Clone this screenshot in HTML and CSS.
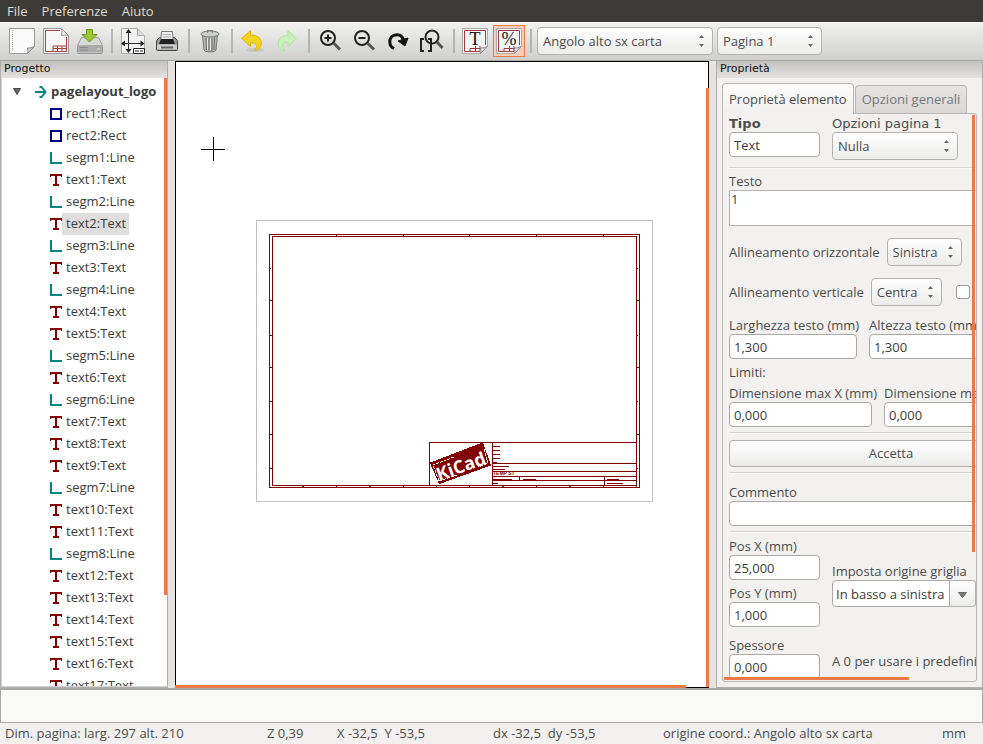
FILE: index.html
```
<!DOCTYPE html>
<html lang="it">
<head>
    <meta charset="UTF-8">
    <meta name="viewport" content="width=device-width, initial-scale=1.0">
    <title>Editor layout pagina</title>
    <link rel="stylesheet" href="styles.css">
</head>
<body>
    <nav class="menubar">
        <button type="button">File</button>
        <button type="button">Preferenze</button>
        <button type="button">Aiuto</button>
    </nav>

    <div class="toolbar">
        <button type="button" class="tool" aria-label="Nuovo">
            <svg width="26" height="26" viewBox="0 0 26 26"><path d="M.5.5h25v18l-7 7H.5z" fill="#fafafa" stroke="#999"/><path d="M3.500 2v22" stroke="#bbb" stroke-dasharray="1 1"/><path d="M25 18.500q-3 2-6.500 1.500 1 3 0 5.500z" fill="#ddd" stroke="#888"/></svg>
        </button>
        <button type="button" class="tool" aria-label="Apri">
            <svg width="26" height="26" viewBox="0 0 26 26"><path d="M.5.500h18l7 7v18H.5z" fill="#f6f6f6" stroke="#999"/><path d="M17 2.500H2.500v21h21V9M10 23v-5h13M10 20.500h13M14.500 18v5M19 18v5" fill="none" stroke="#b04048"/><path d="M18.500.5q1 3.500 0 7 3.500-1 7 0z" fill="#eee" stroke="#999"/></svg>
        </button>
        <button type="button" class="tool" aria-label="Salva">
            <svg width="26" height="26" viewBox="0 0 26 26"><path d="M4.500 9.500h17l4 8v7q0 1-1 1h-23q-1 0-1-1v-7z" fill="#d8d8d8" stroke="#999"/><path d="M1 17h24v7.500H1z" fill="#aaa"/><path d="M3 19.500h8M3 22h8" stroke="#888"/><path d="M20 21h3" stroke="#eee"/><path d="M9.500 1.500h6v5h4.500l-7.500 7.500-7.500-7.500h4.500z" fill="#9cc832" stroke="#6d9420"/></svg>
        </button>
        <span class="sep"></span>
        <button type="button" class="tool" aria-label="Dimensioni pagina">
            <svg width="26" height="26" viewBox="0 0 26 26"><path d="M1.500.500h16l7 7v18h-23z" fill="#f4f4f4" stroke="#aaa"/><path d="M17.500.5v7h7" fill="#ddd" stroke="#aaa"/><path d="M8.500 3v21M3 15.500h20" stroke="#333"/><path d="M8.500 1l3 4h-6zM8.500 25l3-4h-6zM1 15.500l4-3v6zM24.500 15.500l-4-3v6z" fill="#222"/><path d="M13.500 20.500h11v5h-11zM15 23h4M20 23h3" fill="#fff" stroke="#222"/></svg>
        </button>
        <button type="button" class="tool" aria-label="Stampa">
            <svg width="24" height="24" viewBox="0 0 24 24"><path d="M1.500 11.500l3-3h15l3 3v9q0 1-1 1h-19q-1 0-1-1z" fill="#999" stroke="#444"/><path d="M6.500 2.500h11l1 12h-13z" fill="#eee" stroke="#777"/><path d="M6 10h12l2 5H4z" fill="#222"/><path d="M2 15.500h20v5H2z" fill="#ccc"/><path d="M6 18.500h12" stroke="#666" stroke-width="2"/><path d="M8 5.500h8M8 8h8" stroke="#aaa"/></svg>
        </button>
        <span class="sep"></span>
        <button type="button" class="tool" aria-label="Elimina">
            <svg width="20" height="24" viewBox="0 0 20 24"><path d="M2.500 6l1.500 15q0 2 6 2t6-2L17.500 6z" fill="#b4b6b2" stroke="#777"/><path d="M6 8.500l.5 12.500M9 9v13M12 9v13M14.500 8.500L14 21" stroke="#6b6d69" fill="none"/><path d="M7.500 8.500v12M10.500 9v12" stroke="#e8e8e8"/><ellipse cx="10" cy="5" rx="9" ry="3" fill="#ccceca" stroke="#777"/><path d="M7.500 4V1.500h5V4" fill="none" stroke="#777"/></svg>
        </button>
        <span class="sep"></span>
        <button type="button" class="tool" aria-label="Annulla">
            <svg width="24" height="24" viewBox="0 0 24 24"><ellipse cx="14" cy="21" rx="9" ry="2" fill="#c6c6c6"/><path d="M9.500 1.500v4.500c7.500 0 12 4 10.500 10-.6 3-2.500 5-6.500 5.500 3-3 3.500-8-4-8v4L.5 9.500z" fill="#f3d322" stroke="#e0b400"/></svg>
        </button>
        <button type="button" class="tool" aria-label="Ripeti">
            <svg width="24" height="24" viewBox="0 0 24 24"><ellipse cx="11" cy="21" rx="9" ry="2" fill="#d4dcd0"/><path d="M13 1.500v5c-7 0-11 4-9.500 10 .6 3 2.500 5 6.500 5.500-3-3-4-9.500 3-9v4.500l8.500-8z" fill="#c8f0b8" stroke="#b2e0a2"/></svg>
        </button>
        <span class="sep"></span>
        <button type="button" class="tool" aria-label="Ingrandisci">
            <svg width="22" height="24" viewBox="0 0 22 24"><circle cx="9" cy="9" r="7" fill="none" stroke="#222" stroke-width="2"/><path d="M9 5.500v7M5.500 9h7" stroke="#222" stroke-width="2"/><path d="M14.500 14l6.500 6.500" stroke="#555" stroke-width="3"/></svg>
        </button>
        <button type="button" class="tool" aria-label="Riduci">
            <svg width="22" height="24" viewBox="0 0 22 24"><circle cx="9" cy="9" r="7" fill="none" stroke="#222" stroke-width="2"/><path d="M5.500 9h7" stroke="#222" stroke-width="2"/><path d="M14.500 14l6.500 6.500" stroke="#555" stroke-width="3"/></svg>
        </button>
        <button type="button" class="tool" aria-label="Ridisegna">
            <svg width="22" height="24" viewBox="0 0 22 24"><path d="M7 19.500C1.500 17 1.500 9 6.500 6.500c4.500-2 8.500-.5 10 4.500" fill="none" stroke="#111" stroke-width="3"/><path d="M11 12l10-3-3 8z" fill="#111" stroke="#111"/></svg>
        </button>
        <button type="button" class="tool" aria-label="Zoom automatico">
            <svg width="26" height="24" viewBox="0 0 26 24"><circle cx="13" cy="8" r="6.500" fill="none" stroke="#222" stroke-width="2"/><path d="M18 13l5.500 6" stroke="#555" stroke-width="3"/><path d="M5 10H2v12h3M9 10h3v12H9" fill="none" stroke="#222" stroke-width="2"/></svg>
        </button>
        <span class="sep"></span>
        <button type="button" class="tool" aria-label="Mostra testi">
            <svg width="26" height="26" viewBox="0 0 26 26"><path d="M.5.500h25v18l-7 7H.5z" fill="#f6f6f6" stroke="#aaa"/><path d="M18 23.500H2.500v-21h21V17M8 20.500h12M8 23v-2.500M13.500 18v5M18 18v5" fill="none" stroke="#a83840"/><path d="M25 18.500q-3 2-6.500 1.500 1 3 0 5.500z" fill="#eee" stroke="#888"/><text x="13" y="17" class="glyph">T</text></svg>
        </button>
        <button type="button" class="tool active" aria-label="Mostra formati">
            <svg width="26" height="26" viewBox="0 0 26 26"><path d="M.5.500h25v18l-7 7H.5z" fill="#f6f6f6" stroke="#aaa"/><path d="M18 23.500H2.500v-21h21V17M8 20.500h12M8 23v-2.500M13.500 18v5M18 18v5" fill="none" stroke="#a83840"/><path d="M25 18.500q-3 2-6.500 1.500 1 3 0 5.500z" fill="#eee" stroke="#888"/><text x="13" y="17" class="glyph">%</text></svg>
        </button>
        <span class="sep"></span>
        <select class="combo origin" aria-label="Origine coordinate"><option>Angolo alto sx carta</option></select>
        <select class="combo page" aria-label="Pagina"><option>Pagina 1</option></select>
    </div>

    <main class="workspace">
        <section class="panel project">
            <h2>Progetto</h2>
            <div class="tree-wrap">
                <ul class="tree" id="tree">
                    <li class="root">
                        <svg width="10" height="8" viewBox="0 0 10 8"><path d="M1.500.500h7L5 6.500z" fill="#666" stroke="#444"/></svg>
                        <svg class="arrow" width="12" height="12" viewBox="0 0 12 12"><path d="M0 6h10M4.500 1h2l4 5-4 5h-2" fill="none" stroke="#008484" stroke-width="2"/></svg>
                        <span>pagelayout_logo</span>
                    </li>
                </ul>
                <div class="vscroll"></div>
            </div>
        </section>

        <div class="sash"></div>

        <section class="canvas">
            <svg class="sheet" width="100%" height="100%" shape-rendering="crispEdges">
                <g transform="translate(-176 -62)" fill="none" stroke="#840000">
                    <path d="M201 149.500h24M213.500 137v24" stroke="#000"/>
                    <rect x="256.500" y="220.500" width="396" height="281" stroke="#c2c2c2"/>
                    <rect x="269.500" y="234.500" width="370" height="253"/>
                    <rect x="272.500" y="236.500" width="364" height="249"/>
                    <path d="M336.500 235v2M403.500 235v2M469.500 235v2M536.500 235v2M603.500 235v2M336.500 486v2M403.500 486v2M469.500 486v2M536.500 486v2M603.500 486v2"/>
                    <path d="M270 268.500h1M270 300.500h2M270 335.500h2M270 367.500h2M270 401.500h2M270 434.500h2M270 468.500h2M637 268.500h1M637 300.500h2M637 335.500h1M637 367.500h2M637 401.500h1M637 434.500h2M637 468.500h1"/>
                    <path d="M302 486.500h2M369 486.500h2M436 486.500h1M502 486.500h2M569 486.500h2M636 486.500h1" stroke="#008400"/>
                    <path d="M429.500 486v-43.500H637M492.500 443v43M493 463.500h144M493 471.500h144M493 476.500h144M493 480.500h144M519.500 476v4M604.500 476v10"/>
                    <path d="M493 446.500h7M493 450.500h7M493 454.500h7M493 458.500h7M493 462.500h4M493 466.500h16M493 469.500h12M493 479.500h19M523 479.500h13M607 479.500h12M493 483.500h5M607 483.500h16"/>
                    <text x="493" y="475" class="stamp">TEMP ST</text>
                    <path d="M430.500 463l52-20 8 22-51 18.500z" fill="#840000"/>
                    <path d="M454 457L433 465l6 16 18-6M484 449l4 14-10 4" stroke="#fff" stroke-dasharray="3 1"/>
                    <text class="logo" transform="translate(439 481) rotate(-20)">KiCad</text>
                </g>
            </svg>
            <div class="vscroll"></div>
            <div class="hscroll"></div>
        </section>

        <div class="sash"></div>

        <section class="panel properties">
            <h2>Proprietà</h2>
            <div class="notebook">
                <div class="tabs">
                    <button type="button" class="tab current">Proprietà elemento</button>
                    <button type="button" class="tab">Opzioni generali</button>
                </div>
                <div class="tab-page">
                    <form class="form">
                        <div class="row type">
                            <div class="field short">
                                <label for="tipo" class="big bold">Tipo</label>
                                <input id="tipo" type="text" value="Text">
                            </div>
                            <div class="field">
                                <label for="opzioni" class="big">Opzioni pagina 1</label>
                                <select id="opzioni" class="combo options"><option>Nulla</option></select>
                            </div>
                        </div>
                        <hr>
                        <div class="field testo">
                            <label for="testo">Testo</label>
                            <textarea id="testo">1</textarea>
                        </div>
                        <div class="line">
                            <label for="orizz">Allineamento orizzontale</label>
                            <select id="orizz" class="combo horiz"><option>Sinistra</option></select>
                        </div>
                        <div class="line">
                            <label for="vert">Allineamento verticale</label>
                            <select id="vert" class="combo vert"><option>Centra</option></select>
                            <input type="checkbox" aria-label="Grassetto">
                        </div>
                        <div class="row sizes">
                            <div class="field width">
                                <label for="larg">Larghezza testo (mm)</label>
                                <input id="larg" type="text" value="1,300">
                            </div>
                            <div class="field width">
                                <label for="alt">Altezza testo (mm)</label>
                                <input id="alt" type="text" value="1,300">
                            </div>
                        </div>
                        <p class="limits">Limiti:</p>
                        <div class="row">
                            <div class="field limit">
                                <label for="maxx">Dimensione max X (mm)</label>
                                <input id="maxx" type="text" value="0,000">
                            </div>
                            <div class="field limit">
                                <label for="maxy">Dimensione max Y (mm)</label>
                                <input id="maxy" type="text" value="0,000">
                            </div>
                        </div>
                        <hr>
                        <button type="button" class="accept">Accetta</button>
                        <hr>
                        <div class="field comment">
                            <label for="commento">Commento</label>
                            <input id="commento" type="text">
                        </div>
                        <hr>
                        <div class="row position">
                            <div class="stack">
                                <div class="field short">
                                    <label for="posx">Pos X (mm)</label>
                                    <input id="posx" type="text" value="25,000">
                                </div>
                                <div class="field short">
                                    <label for="posy">Pos Y (mm)</label>
                                    <input id="posy" type="text" value="1,000">
                                </div>
                            </div>
                            <div class="field grid-origin">
                                <label for="origine">Imposta origine griglia</label>
                                <div class="combobox">
                                    <input id="origine" type="text" value="In basso a sinistra">
                                    <button type="button" aria-label="Apri elenco"><svg width="9" height="6" viewBox="0 0 9 6"><path d="M.5.500h8l-4 5z" fill="#777" stroke="#666"/></svg></button>
                                </div>
                            </div>
                        </div>
                        <div class="row thickness">
                            <div class="field short">
                                <label for="spess">Spessore</label>
                                <input id="spess" type="text" value="0,000">
                            </div>
                            <p>A 0 per usare i predefiniti</p>
                        </div>
                    </form>
                    <div class="vscroll"></div>
                    <div class="hscroll"></div>
                </div>
            </div>
        </section>
    </main>

    <div class="messages"></div>

    <footer class="statusbar">
        <span>Dim. pagina: larg. 297 alt. 210</span>
        <span>Z 0,39</span>
        <span>X -32,5&nbsp; Y -53,5</span>
        <span>dx -32,5&nbsp; dy -53,5</span>
        <span>origine coord.: Angolo alto sx carta</span>
        <span>mm</span>
    </footer>

    <script src="tree.js"></script>
</body>
</html>
```
FILE: tree.js
```
const items = [
    'rect1:Rect', 'rect2:Rect', 'segm1:Line', 'text1:Text', 'segm2:Line', 'text2:Text',
    'segm3:Line', 'text3:Text', 'segm4:Line', 'text4:Text', 'text5:Text', 'segm5:Line',
    'text6:Text', 'segm6:Line', 'text7:Text', 'text8:Text', 'text9:Text', 'segm7:Line',
    'text10:Text', 'text11:Text', 'segm8:Line', 'text12:Text', 'text13:Text', 'text14:Text',
    'text15:Text', 'text16:Text', 'text17:Text'
];

const icons = {
    Rect: '<path d="M1 1h10v10H1z" fill="none" stroke="#000084" stroke-width="2"/>',
    Line: '<path d="M1 0v11h11" fill="none" stroke="#008484" stroke-width="2"/>',
    Text: '<path d="M0 0h12v3h-1V2H7v8h2v2H3v-2h2V2H1v1H0z" fill="#840000"/>'
};

const tree = document.getElementById('tree');

items.forEach((name) => {
    const li = document.createElement('li');
    const kind = name.split(':')[1];
    li.innerHTML = `<svg width="12" height="12" viewBox="0 0 12 12" shape-rendering="crispEdges">${icons[kind]}</svg><span>${name}</span>`;
    if (name === 'text2:Text') {
        li.className = 'selected';
    }
    tree.appendChild(li);
});
```
FILE: styles.css
```
* {
    box-sizing: border-box;
}
body {
    margin: 0;
    height: 100vh;
    display: flex;
    flex-direction: column;
    overflow: hidden;
    background-color: #f2f1f0;
    color: #4c4c4c;
    font-family: "Open Sans", "Noto Sans", sans-serif;
    font-size: 13px;
    line-height: 17px;
}
button, input, select, textarea {
    font: inherit;
    color: inherit;
    margin: 0;
}
p, ul, h2 {
    margin: 0;
    padding: 0;
}

/* menu and toolbar */
.menubar {
    display: flex;
    height: 22px;
    flex: none;
    background-color: #3c3b37;
    color: #dfdbd2;
}
.menubar button {
    border: none;
    background: none;
    padding: 0 7px;
}
.toolbar {
    display: flex;
    align-items: center;
    height: 38px;
    flex: none;
    padding: 0 0 1px 5px;
    border-top: 1px solid #fff;
    background: linear-gradient(#f1f1f0, #cfcfce);
}
.tool {
    width: 34px;
    height: 34px;
    flex: none;
    display: flex;
    align-items: center;
    justify-content: center;
    padding: 0;
    border: none;
    background: none;
}
.tool.active {
    width: 32px;
    height: 32px;
    margin: 0 1px;
    border: 1px solid #f07746;
    background-color: #f8cdb9;
}
.glyph {
    font-family: "Liberation Serif", serif;
    font-size: 18px;
    text-anchor: middle;
    fill: #111;
}
.sep {
    width: 2px;
    height: 24px;
    flex: none;
    margin: 0 3px 0 4px;
    background-color: #b5b5b4;
}
.combo {
    appearance: none;
    height: 28px;
    padding: 0 20px 0 5px;
    border: 1px solid #b4b2ae;
    border-radius: 4px;
    background: url("data:image/svg+xml,%3Csvg xmlns='http://www.w3.org/2000/svg' width='7' height='12'%3E%3Cpath d='M1 3L3.500 0 6 3zM1 9h5L3.500 12z' fill='%23666'/%3E%3C/svg%3E") no-repeat right 7px center, linear-gradient(#fefefe, #ececeb);
}
.origin {
    width: 176px;
    margin: 0 4px 0 2px;
}
.page {
    width: 105px;
}

/* docked panels */
.workspace {
    flex: 1;
    min-height: 0;
    display: flex;
    border-top: 1px solid #a9a9a8;
}
.panel {
    display: flex;
    flex-direction: column;
    flex: none;
    border: 1px solid #b0afad;
    border-top: none;
}
.panel h2 {
    height: 17px;
    flex: none;
    padding-left: 3px;
    font-family: "DejaVu Sans", sans-serif;
    font-size: 11px;
    font-weight: normal;
    line-height: 15px;
    color: #111;
    background: linear-gradient(#c2c1c0, #e4e3e1);
}
.project {
    width: 168px;
}
.properties {
    width: 267px;
}
.sash {
    width: 7px;
    flex: none;
    background-color: #e4e3e1;
}
.vscroll, .hscroll {
    position: absolute;
    background-color: #f07746;
}
.vscroll {
    width: 3px;
    right: 0;
    top: 0;
}
.hscroll {
    height: 3px;
    left: 0;
    bottom: 0;
}

/* project tree */
.tree-wrap {
    position: relative;
    flex: 1;
    min-height: 0;
    overflow: hidden;
    background-color: #fff;
    border: 1px solid #d0cfcd;
    border-width: 0 0 1px 1px;
}
.tree-wrap .vscroll {
    height: 85%;
}
.tree {
    list-style: none;
    padding-top: 3px;
}
.tree li {
    display: flex;
    align-items: center;
    height: 22px;
    padding-left: 48px;
    color: #3c3c3c;
}
.tree li span {
    padding: 2px 3px 3px 4px;
}
.tree .selected span {
    background-color: #dfdedc;
}
.tree .root {
    padding-left: 10px;
    font-weight: bold;
}
.tree .arrow {
    margin-left: 13px;
}

/* drawing area */
.canvas {
    position: relative;
    flex: 1;
    min-width: 0;
    background-color: #fff;
    border: 1px solid #000;
}
.sheet {
    display: block;
}
.canvas .vscroll {
    top: 26px;
    right: -1px;
    bottom: 0;
}
.canvas .hscroll {
    left: -1px;
    bottom: -1px;
    width: 96%;
}
.stamp {
    font-family: "Liberation Sans", sans-serif;
    font-size: 5px;
    font-weight: bold;
    fill: #840000;
    stroke: none;
}
.logo {
    font-family: "Open Sans", sans-serif;
    font-size: 18px;
    font-weight: bold;
    fill: #fff;
    stroke: none;
}

/* properties */
.notebook {
    flex: 1;
    min-height: 0;
    display: flex;
    flex-direction: column;
    padding: 5px;
}
.tabs {
    display: flex;
    align-items: flex-end;
    gap: 1px;
    height: 30px;
    flex: none;
}
.tab {
    height: 28px;
    padding: 0 6px;
    white-space: nowrap;
    border: 1px solid #bab8b5;
    border-bottom: none;
    border-radius: 4px 4px 0 0;
    background: linear-gradient(#e6e5e3, #d8d7d5);
    color: #777;
}
.tab.current {
    height: 31px;
    margin-bottom: -1px;
    z-index: 1;
    background: linear-gradient(#fbfbfb, #f2f1f0);
    color: #4c4c4c;
}
.tab-page {
    position: relative;
    flex: 1;
    min-height: 0;
    overflow: hidden;
    border: 1px solid #bab8b5;
    border-radius: 0 3px 3px 3px;
    padding: 1px 6px 0;
}
.tab-page .vscroll {
    top: 1px;
    right: 1px;
    height: 77%;
}
.tab-page .hscroll {
    left: 1px;
    bottom: 1px;
    width: 73%;
}
.form {
    min-width: 324px;
}
.form label, .form p {
    white-space: nowrap;
}
.row {
    display: flex;
    gap: 12px;
}
.field {
    display: flex;
    flex-direction: column;
    align-items: flex-start;
}
.type {
    margin-bottom: 7px;
}
.short {
    width: 91px;
}
.width {
    width: 128px;
}
.limit {
    width: 143px;
}
.big {
    font-family: "DejaVu Sans", sans-serif;
    font-size: 13px;
}
.bold {
    font-weight: bold;
}
.form input[type="text"] {
    width: 100%;
    height: 25px;
    padding: 0 4px;
    border: 1px solid #aaa8a4;
    border-radius: 4px;
    background-color: #fff;
    color: #3c3c3c;
}
.form hr {
    height: 2px;
    margin: 5px 0 4px;
    border: none;
    border-top: 1px solid #d6d4d1;
    border-bottom: 1px solid #fbfbfa;
}
.options {
    width: 126px;
}
.testo textarea {
    width: 100%;
    height: 36px;
    padding: 0 1px;
    resize: none;
    border: 1px solid #b4b2ae;
    background-color: #fff;
    color: #3c3c3c;
}
.line {
    display: flex;
    align-items: center;
    gap: 7px;
    margin-top: 12px;
}
.horiz {
    width: 75px;
}
.vert {
    width: 71px;
}
.line input {
    appearance: none;
    width: 14px;
    height: 14px;
    margin-left: 7px;
    border: 1px solid #999;
    border-radius: 3px;
    background-color: #fff;
}
.sizes {
    margin-top: 11px;
}
.limits {
    margin: 5px 0 4px;
}
.form .accept {
    display: block;
    width: 100%;
    height: 27px;
    margin-top: 6px;
    border: 1px solid #b4b2ae;
    border-radius: 4px;
    background: linear-gradient(#fefefe, #ececeb);
}
.comment {
    margin-top: 10px;
}
.position {
    align-items: center;
    margin-top: 5px;
}
.stack {
    display: flex;
    flex-direction: column;
    gap: 5px;
}
.grid-origin {
    padding-top: 5px;
}
.combobox {
    display: flex;
    width: 144px;
}
.form .combobox input {
    flex: 1;
    min-width: 0;
    height: 27px;
    padding: 0 3px;
    border-radius: 4px 0 0 4px;
}
.combobox button {
    width: 26px;
    padding: 0;
    border: 1px solid #b4b2ae;
    border-left: none;
    border-radius: 0 4px 4px 0;
    background: linear-gradient(#fefefe, #ececeb);
}
.thickness {
    align-items: center;
    margin-top: 10px;
}
.thickness p {
    padding-top: 6px;
}

/* bottom */
.messages {
    height: 35px;
    flex: none;
    border: 1px solid #a9a9a8;
    border-top-width: 2px;
    background-color: #f9f9f7;
}
.statusbar {
    display: grid;
    grid-template-columns: 262fr 70fr 156fr 170fr 279fr 41fr;
    align-items: center;
    height: 21px;
    flex: none;
    padding-left: 5px;
    white-space: nowrap;
}
```
